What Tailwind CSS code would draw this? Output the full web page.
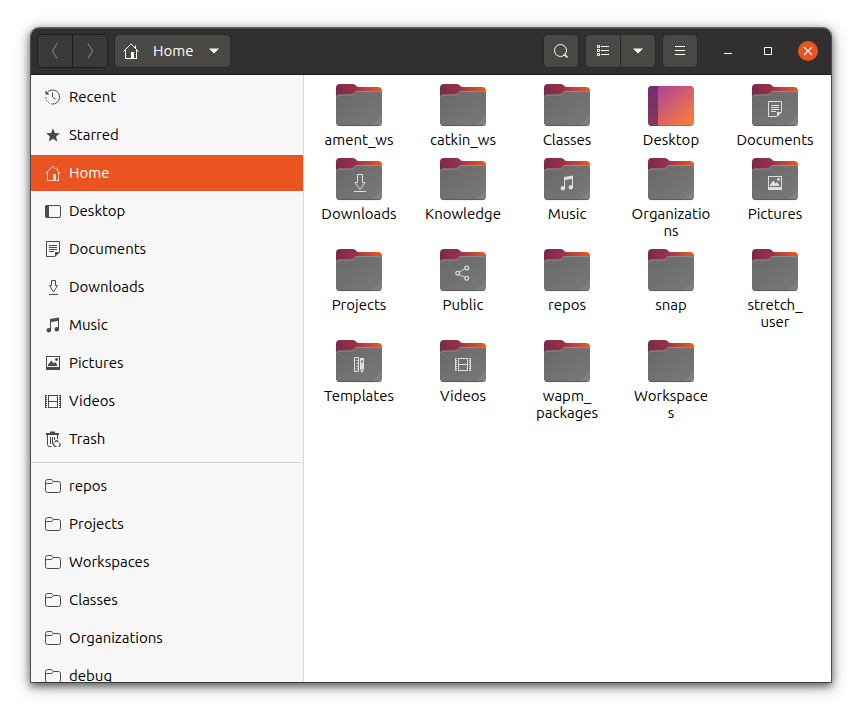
<!DOCTYPE html>
<html lang="en">
<head>
    <meta charset="UTF-8">
    <meta name="viewport" content="width=device-width, initial-scale=1.0">
    <title>Home</title>
    <script src="https://cdn.jsdelivr.net/npm/@tailwindcss/browser@4"></script>
</head>
<body class="h-screen bg-white pt-7 pr-[35px] pb-[38px] pl-[31px] font-['Ubuntu','Noto_Sans',sans-serif] text-[15px] text-black">
    <!-- Icon sprite -->
    <svg class="absolute size-0" aria-hidden="true">
        <defs>
            <linearGradient id="back" x1="0" y1="0" x2="1" y2="0">
                <stop offset="0" stop-color="#7a284f"/>
                <stop offset=".4" stop-color="#95324a"/>
                <stop offset="1" stop-color="#ee5a22"/>
            </linearGradient>
            <linearGradient id="front" x1="0" y1="0" x2="1" y2="1">
                <stop offset="0" stop-color="#686868"/>
                <stop offset="1" stop-color="#797979"/>
            </linearGradient>
            <linearGradient id="desk" x1="0" y1="0" x2="1" y2="1">
                <stop offset=".1" stop-color="#ab419a"/>
                <stop offset=".5" stop-color="#d25f6e"/>
                <stop offset=".9" stop-color="#f57a3d"/>
            </linearGradient>
            <linearGradient id="dock" x1="0" y1="0" x2="0" y2="1">
                <stop offset="0" stop-color="#752b70"/>
                <stop offset="1" stop-color="#863a5b"/>
            </linearGradient>
        </defs>
        <symbol id="folder" viewBox="0 0 48 48">
            <path d="M1 40V6q0-4 4-4h13q2 0 3 1.500t3 1.500h19q4 0 4 4v31z" fill="url(#back)"/>
            <path d="M1 40.500V15.500q0-3 3-3h12q1.500 0 2.500-1.200l1-1.100q1-1.200 2.500-1.200h22q3 0 3 3V40.500q0 3.500-3.500 3.500h-39Q1 44 1 40.500z" fill="url(#front)"/>
            <path d="M1.500 15q.5-2 2.500-2h12.500q1.500 0 2.500-1.200l1-1.100q1-1.200 2.500-1.200h21.500q2 0 2.500 2" fill="none" stroke="#8d8d8d"/>
            <path d="M47 33v7.500q0 3.500-3.500 3.500H36z" fill="#fff" opacity=".06"/>
            <path d="M2.500 43q1 .6 2 .6h39q1 0 2-.6" fill="none" stroke="#555" stroke-width=".8"/>
        </symbol>
        <symbol id="desktop-big" viewBox="0 0 48 48">
            <rect x="1" y="4" width="46" height="40" rx="4" fill="url(#desk)"/>
            <path d="M11 4v40H5q-4 0-4-4V8q0-4 4-4z" fill="url(#dock)"/>
            <path d="M2.500 43q1 .6 2 .6h39q1 0 2-.6" fill="none" stroke="#8e4352" stroke-width=".8" opacity=".6"/>
        </symbol>
        <symbol id="recent" viewBox="0 0 16 16">
            <path d="M2 3.800A7 7 0 1 1 7.500 15" fill="none" stroke="currentColor"/>
            <path d="M7.500 15A7 7 0 0 1 .8 7" fill="none" stroke="currentColor" stroke-dasharray="1.500 1.500"/>
            <path d="M.5 1.500v4h4z" fill="currentColor"/>
            <path d="M7.500 3.500V8l3 2.500" fill="none" stroke="currentColor"/>
        </symbol>
        <symbol id="star" viewBox="0 0 16 16">
            <path d="M8 1.200l1.900 4.700 5 .4-3.800 3.300 1.200 4.900L8 11.800l-4.300 2.700 1.200-4.900L1.100 6.300l5-.4z" fill="currentColor"/>
        </symbol>
        <symbol id="home" viewBox="0 0 16 16">
            <path d="M.4 8.600L8 1l7.600 7.600M2.500 7v8.500h5M13.500 7v8.500M12.500 5V2.500" fill="none" stroke="currentColor"/>
            <path d="M8 9h3v6h3v1H7V15h1z" fill="currentColor"/>
        </symbol>
        <symbol id="desktop" viewBox="0 0 16 16">
            <rect x=".5" y="2.500" width="15" height="12" rx="1.500" fill="none" stroke="currentColor"/>
            <path d="M2 2h2v13H2q-2 0-2-2V4q0-2 2-2z" fill="currentColor"/>
        </symbol>
        <symbol id="documents" viewBox="0 0 16 16">
            <path d="M1.500.5h13v10l-5 5h-8z" fill="none" stroke="currentColor"/>
            <path d="M4 4.500h8M4 6.500h8M4 8.500h8M4 10.500h5" stroke="currentColor"/>
            <path d="M10 16v-5h5z" fill="currentColor"/>
        </symbol>
        <symbol id="downloads" viewBox="0 0 16 16">
            <path d="M6.500 1.500h4v5h2L8.500 13l-4-6.500h2zM4 15.500h9" fill="none" stroke="currentColor"/>
        </symbol>
        <symbol id="downloads-big" viewBox="0 0 16 18">
            <path d="M5.500.5h5v8h2.500L8 15.500l-5-7h2.500zM2 17.500h12" fill="none" stroke="currentColor"/>
        </symbol>
        <symbol id="music" viewBox="0 0 16 16">
            <path d="M5 2l9-1.500V12h-1V4L6 5v8.500H5z" fill="currentColor"/>
            <circle cx="3.800" cy="13.200" r="2.200" fill="currentColor"/>
            <circle cx="11.800" cy="12.200" r="2.200" fill="currentColor"/>
        </symbol>
        <symbol id="pictures" viewBox="0 0 16 16">
            <path d="M1 1h14v14H1zM2 2v10h12V2z" fill="currentColor" fill-rule="evenodd"/>
            <path d="M3 11V9.500L6.500 5.500l2 3 1.500-1.500L12 9.500V11z" fill="currentColor"/>
            <circle cx="11.500" cy="4.500" r="1.400" fill="currentColor"/>
        </symbol>
        <symbol id="videos" viewBox="0 0 16 16">
            <path d="M3.500 2v13M12.500 2v13M3 2.500h10M3 8.500h10M3 14.500h10" stroke="currentColor"/>
            <path d="M1.500 2v13M14.500 2v13" stroke="currentColor" stroke-dasharray="1 1"/>
            <path d="M.5 2v13M15.500 2v13" stroke="currentColor"/>
        </symbol>
        <symbol id="trash" viewBox="0 0 16 16">
            <path d="M1 2h13v2H1zM5 .500h5V2H5z" fill="currentColor"/>
            <path d="M2.500 4v9.500q0 2 2 2h2M12.500 4v4M5.500 6v7M7.500 6v7M9.500 6v3" fill="none" stroke="currentColor"/>
            <path d="M9.500 11l2-1.500 2 1.500M14.500 12q1.500 3-1 3.500M11.500 15.500q-4 0-2.500-3.500" fill="none" stroke="currentColor" stroke-width="1.200"/>
        </symbol>
        <symbol id="bookmark" viewBox="0 0 16 16">
            <path d="M.5 12.500v-9q0-2 2-2h3.500q1 0 1.500 1t1.500 1h4.500q2 0 2 2v7q0 2-2 2h-11q-2 0-2-2zM.5 6.500q0-1 2-1h3.500q1 0 1.500-.8l.8-1.200" fill="none" stroke="currentColor"/>
        </symbol>
        <symbol id="share" viewBox="0 0 16 16">
            <path d="M4.500 7l5.500-3.500M4.500 9.500l5.500 3" stroke="currentColor"/>
            <g fill="none" stroke="currentColor" stroke-width="1.200">
                <circle cx="2.700" cy="8.200" r="1.900"/>
                <circle cx="11.700" cy="3" r="1.900"/>
                <circle cx="11.700" cy="13.300" r="1.900"/>
            </g>
        </symbol>
        <symbol id="templates" viewBox="0 0 16 16">
            <path d="M3.500.5h4v14h-4zM5.500 3.500h2M5.500 6.500h2M5.500 9.500h2M5.500 12h2" fill="none" stroke="currentColor"/>
            <path d="M9 1h4v11l-1.500 3.500h-1L9 12z" fill="currentColor"/>
            <path d="M10.500 3.500h1v2h-1zM10 12.500h2" fill="none" stroke="#6f6f6f" stroke-width=".8"/>
        </symbol>
        <symbol id="down" viewBox="0 0 10 6">
            <path d="M0 .5h10L5 5.500z" fill="currentColor"/>
        </symbol>
    </svg>

    <div class="flex h-full flex-col overflow-hidden rounded-t-lg bg-white shadow-[0_0_0_1px_rgba(0,0,0,0.5),0_3px_9px_1px_rgba(0,0,0,0.6),0_4px_18px_3px_rgba(0,0,0,0.18)]">
        <header class="flex items-center gap-1.5 border-b border-[#1c1a1a] bg-[#322f30] px-1.5 py-1.5 text-white shadow-[inset_0_1px_0_#474445]">
            <div class="flex h-[34px] rounded-[5px] border border-[#1f1d1d] bg-[#3b3a39] text-[#929190]">
                <button class="grid w-[35px] place-items-center border-r border-[#1f1d1d]" aria-label="Back">
                    <svg class="size-4" viewBox="0 0 16 16"><path d="M10 .5L5.500 8l4.500 7.500" fill="none" stroke="currentColor"/></svg>
                </button>
                <button class="grid w-[34px] place-items-center" aria-label="Forward">
                    <svg class="size-4" viewBox="0 0 16 16"><path d="M6 .5L10.500 8 6 15.500" fill="none" stroke="currentColor"/></svg>
                </button>
            </div>
            <button class="flex h-[34px] items-center rounded-[5px] border border-[#292727] bg-[#4a4845] pr-[11px] pl-2">
                <svg class="size-4"><use href="#home"/></svg>
                <span class="mr-4 ml-3.5">Home</span>
                <svg class="h-1.5 w-2.5"><use href="#down"/></svg>
            </button>
            <button class="ml-auto grid h-[34px] w-9 place-items-center rounded-[5px] border border-[#292727] bg-[#4a4845]" aria-label="Search">
                <svg class="size-4" viewBox="0 0 16 16"><circle cx="7.500" cy="7.500" r="6" fill="none" stroke="currentColor"/><path d="M11 11l3.500 3.500" stroke="currentColor" stroke-width="1.500"/></svg>
            </button>
            <div class="flex h-[34px] rounded-[5px] border border-[#292727] bg-[#4a4845]">
                <button class="grid w-[35px] place-items-center border-r border-[#292727]" aria-label="List view">
                    <svg class="size-4" viewBox="0 0 16 16" fill="none" stroke="currentColor"><path d="M2.500 2.500h2v2h-2zM2.500 6.500h2v2h-2zM2.500 10.500h2v2h-2zM6 3.500h8M6 7.500h8M6 11.500h8"/></svg>
                </button>
                <button class="grid w-[34px] place-items-center" aria-label="View options">
                    <svg class="h-1.5 w-2.5"><use href="#down"/></svg>
                </button>
            </div>
            <button class="grid h-[34px] w-9 place-items-center rounded-[5px] border border-[#292727] bg-[#4a4845]" aria-label="Menu">
                <svg class="size-4" viewBox="0 0 16 16"><path d="M3 3.500h10M3 7.500h10M3 11.500h10" stroke="currentColor"/></svg>
            </button>
            <div class="mr-[7px] ml-3.5 flex gap-5">
                <button class="grid size-5 place-items-center" aria-label="Minimize">
                    <svg class="size-4" viewBox="0 0 16 16"><path d="M4 10.500h8" stroke="currentColor"/></svg>
                </button>
                <button class="grid size-5 place-items-center" aria-label="Maximize">
                    <svg class="size-4" viewBox="0 0 16 16"><path d="M4.500 4.500h7v7h-7z" fill="none" stroke="currentColor"/></svg>
                </button>
                <button class="grid size-5 place-items-center rounded-full bg-[#e95420]" aria-label="Close">
                    <svg class="size-4" viewBox="0 0 16 16"><path d="M4 4l8 8M12 4l-8 8" stroke="currentColor" stroke-width="1.200"/></svg>
                </button>
            </div>
        </header>

        <div class="flex min-h-0 flex-1">
            <nav class="w-[273px] shrink-0 overflow-hidden border-r border-[#d5d5d5] bg-[#f7f7f7]">
                <div class="flex flex-col gap-0.5 pt-1 pb-[5px]">
                    <a href="#" class="flex h-9 items-center gap-2 pl-3.5"><svg class="size-4 text-[#4a4a4a]"><use href="#recent"/></svg>Recent</a>
                    <a href="#" class="flex h-9 items-center gap-2 pl-3.5"><svg class="size-4 text-[#4a4a4a]"><use href="#star"/></svg>Starred</a>
                    <a href="#" class="flex h-9 items-center gap-2 bg-[#e95420] pl-3.5 text-white"><svg class="size-4 text-[#fbd5c7]"><use href="#home"/></svg>Home</a>
                    <a href="#" class="flex h-9 items-center gap-2 pl-3.5"><svg class="size-4 text-[#4a4a4a]"><use href="#desktop"/></svg>Desktop</a>
                    <a href="#" class="flex h-9 items-center gap-2 pl-3.5"><svg class="size-4 text-[#4a4a4a]"><use href="#documents"/></svg>Documents</a>
                    <a href="#" class="flex h-9 items-center gap-2 pl-3.5"><svg class="size-4 text-[#4a4a4a]"><use href="#downloads"/></svg>Downloads</a>
                    <a href="#" class="flex h-9 items-center gap-2 pl-3.5"><svg class="size-4 text-[#4a4a4a]"><use href="#music"/></svg>Music</a>
                    <a href="#" class="flex h-9 items-center gap-2 pl-3.5"><svg class="size-4 text-[#4a4a4a]"><use href="#pictures"/></svg>Pictures</a>
                    <a href="#" class="flex h-9 items-center gap-2 pl-3.5"><svg class="size-4 text-[#4a4a4a]"><use href="#videos"/></svg>Videos</a>
                    <a href="#" class="flex h-9 items-center gap-2 pl-3.5"><svg class="size-4 text-[#4a4a4a]"><use href="#trash"/></svg>Trash</a>
                </div>
                <div class="flex flex-col gap-0.5 border-t border-[#d5d5d5] pt-[5px]">
                    <a href="#" class="flex h-9 items-center gap-2 pl-3.5"><svg class="size-4 text-[#4a4a4a]"><use href="#bookmark"/></svg>repos</a>
                    <a href="#" class="flex h-9 items-center gap-2 pl-3.5"><svg class="size-4 text-[#4a4a4a]"><use href="#bookmark"/></svg>Projects</a>
                    <a href="#" class="flex h-9 items-center gap-2 pl-3.5"><svg class="size-4 text-[#4a4a4a]"><use href="#bookmark"/></svg>Workspaces</a>
                    <a href="#" class="flex h-9 items-center gap-2 pl-3.5"><svg class="size-4 text-[#4a4a4a]"><use href="#bookmark"/></svg>Classes</a>
                    <a href="#" class="flex h-9 items-center gap-2 pl-3.5"><svg class="size-4 text-[#4a4a4a]"><use href="#bookmark"/></svg>Organizations</a>
                    <a href="#" class="flex h-9 items-center gap-2 pl-3.5"><svg class="size-4 text-[#4a4a4a]"><use href="#bookmark"/></svg>debug</a>
                </div>
            </nav>

            <main class="grid flex-1 grid-cols-[repeat(auto-fill,104px)] content-start gap-y-2 overflow-hidden pt-[7px] pl-[3px] text-center leading-[17px]">
                <a href="#" class="flex flex-col items-center gap-px"><svg class="size-12"><use href="#folder"/></svg>ament_ws</a>
                <a href="#" class="flex flex-col items-center gap-px"><svg class="size-12"><use href="#folder"/></svg>catkin_ws</a>
                <a href="#" class="flex flex-col items-center gap-px"><svg class="size-12"><use href="#folder"/></svg>Classes</a>
                <a href="#" class="flex flex-col items-center gap-px"><svg class="size-12"><use href="#desktop-big"/></svg>Desktop</a>
                <a href="#" class="flex flex-col items-center gap-px"><svg class="size-12 text-[#dedede]"><use href="#folder"/><use href="#documents" x="16" y="19" width="16" height="16"/></svg>Documents</a>
                <a href="#" class="flex flex-col items-center gap-px"><svg class="size-12 text-[#dedede]"><use href="#folder"/><use href="#downloads-big" x="17" y="18" width="16" height="18"/></svg>Downloads</a>
                <a href="#" class="flex flex-col items-center gap-px"><svg class="size-12"><use href="#folder"/></svg>Knowledge</a>
                <a href="#" class="flex flex-col items-center gap-px"><svg class="size-12 text-[#dedede]"><use href="#folder"/><use href="#music" x="16" y="19" width="16" height="16"/></svg>Music</a>
                <a href="#" class="flex flex-col items-center gap-px"><svg class="size-12"><use href="#folder"/></svg><span>Organizatio<br>ns</span></a>
                <a href="#" class="flex flex-col items-center gap-px"><svg class="size-12 text-[#dedede]"><use href="#folder"/><use href="#pictures" x="16" y="19" width="16" height="16"/></svg>Pictures</a>
                <a href="#" class="flex flex-col items-center gap-px"><svg class="size-12"><use href="#folder"/></svg>Projects</a>
                <a href="#" class="flex flex-col items-center gap-px"><svg class="size-12 text-[#dedede]"><use href="#folder"/><use href="#share" x="16" y="18" width="16" height="16"/></svg>Public</a>
                <a href="#" class="flex flex-col items-center gap-px"><svg class="size-12"><use href="#folder"/></svg>repos</a>
                <a href="#" class="flex flex-col items-center gap-px"><svg class="size-12"><use href="#folder"/></svg>snap</a>
                <a href="#" class="flex flex-col items-center gap-px"><svg class="size-12"><use href="#folder"/></svg><span>stretch_<br>user</span></a>
                <a href="#" class="flex flex-col items-center gap-px"><svg class="size-12 text-[#dedede]"><use href="#folder"/><use href="#templates" x="16" y="19" width="16" height="16"/></svg>Templates</a>
                <a href="#" class="flex flex-col items-center gap-px"><svg class="size-12 text-[#dedede]"><use href="#folder"/><use href="#videos" x="16" y="18" width="16" height="16"/></svg>Videos</a>
                <a href="#" class="flex flex-col items-center gap-px"><svg class="size-12"><use href="#folder"/></svg><span>wapm_<br>packages</span></a>
                <a href="#" class="flex flex-col items-center gap-px"><svg class="size-12"><use href="#folder"/></svg><span>Workspace<br>s</span></a>
            </main>
        </div>
    </div>
</body>
</html>
